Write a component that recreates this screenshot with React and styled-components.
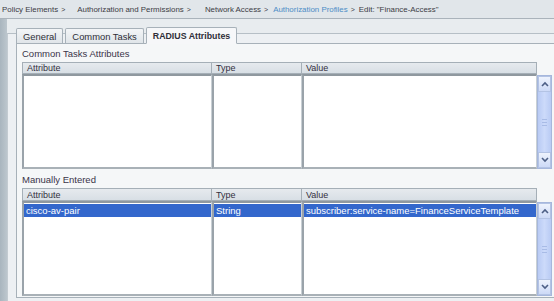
import React from 'react';
import styled, {createGlobalStyle} from 'styled-components';

const Global = createGlobalStyle`
  html, body {
    margin: 0;
    padding: 0;
    background: #e8ecef;
    font-family: "Liberation Sans", Arial, sans-serif;
    font-size: 9.5px;
    color: #343440;
    overflow: hidden;
  }
`;

const Breadcrumb = styled.div`
  height: 18px;
  line-height: 20px;
  padding-left: 2px;
  background: #e1e6ea;
  border-bottom: 1px solid #aab3bb;
  font-size: 7.9px;
  color: #3c3c44;
  white-space: nowrap;
`;

const Crumb = styled.span`
  color: ${props => (props.link ? '#4b8dc6' : '#3c3c44')};
`;

const Sep = styled.span`
  margin-left: 3px;
  margin-right: ${props => props.after}px;
  font-size: 7px;
`;

const Main = styled.div`
  display: flex;
  height: 282px;
`;

const SideStrip = styled.div`
  width: 7px;
  background: linear-gradient(to right, #a9b5be, #bcc6cd);
  flex-shrink: 0;
`;

const Frame = styled.div`
  flex: 1;
  margin-top: 14px;
  border-top: 1px solid #b6bfc6;
  border-left: 1px solid #c3cbd1;
  background: #edf0f3;
  display: flex;
  flex-direction: column;
`;

const TabsRow = styled.div`
  display: flex;
  align-items: flex-end;
  gap: 2px;
  margin-top: -7px;
  padding-left: 8px;
  position: relative;
  z-index: 1;
`;

const Tab = styled.div`
  height: ${props => (props.active ? '15px' : '14px')};
  line-height: ${props => (props.active ? '16px' : '15px')};
  padding: 0 6px;
  border: 1px solid #a7b1b9;
  border-bottom: ${props => (props.active ? '1px solid #f6f7f9' : 'none')};
  border-radius: 2px 2px 0 0;
  margin-bottom: ${props => (props.active ? '-1px' : '0')};
  background: ${props => (props.active ? '#f6f7f9' : 'linear-gradient(#f3f5f7, #e0e5e9)')};
  font-weight: ${props => (props.active ? 'bold' : 'normal')};
  font-size: ${props => (props.active ? '8.8px' : '9.4px')};
  color: #2e2e38;
`;

const TabPanel = styled.div`
  flex: 1;
  margin-left: 8px;
  margin-right: -6px;
  margin-bottom: 3px;
  border: 1px solid #a7b1b9;
  background: #f5f7f8;
  padding: 1px 0 0 5px;
`;

const SectionLabel = styled.div`
  height: 17px;
  line-height: 17px;
  color: #3a3448;
`;

const Table = styled.div`
  display: grid;
  grid-template-columns: 190px 90px 235px 15px;
  grid-template-rows: ${props => props.headH}px 95px;
  margin-bottom: ${props => props.gap}px;
`;

const HeadCell = styled.div`
  background: linear-gradient(#e6eaee, #d8dfe5);
  border: 1px solid #a5afb7;
  border-left: ${props => (props.first ? '1px solid #a5afb7' : 'none')};
  padding-left: 4px;
  line-height: ${props => props.h - 1}px;
  font-size: 9px;
  color: #34303e;
`;

const HeadGap = styled.div``;

const BodyCell = styled.div`
  background: #fff;
  border-top: 2px solid #8f989f;
  border-left: 2px solid #9aa3aa;
  border-right: 1px solid #c9d0d5;
  border-bottom: 2px solid #a9b1b7;
  padding-top: 1px;
  overflow: hidden;
`;

const Row = styled.div`
  height: 13px;
  line-height: 14px;
  padding-left: 2px;
  background: #3367cc;
  color: #fff;
  white-space: nowrap;
  margin-right: ${props => (props.last ? '0' : '-1px')};
`;

const Scrollbar = styled.div`
  display: flex;
  flex-direction: column;
  border: 1px solid #a6b7dc;
  background: linear-gradient(to right, #b9cbf4, #ccdafa 50%, #b9cbf4);
  margin-top: 1px;
`;

const ScrollBtn = styled.div`
  height: 14px;
  display: flex;
  align-items: center;
  justify-content: center;
  background: linear-gradient(#eef3fd, #cddaf7);
  border: 1px solid #b3c3e4;
`;

const Track = styled.div`
  flex: 1;
  display: flex;
  align-items: center;
  justify-content: center;
`;

const Grip = styled.div`
  width: 5px;
  height: 5px;
  border-top: 1px solid #a8bbe6;
  border-bottom: 1px solid #a8bbe6;
  position: relative;
  &::after {
    content: '';
    position: absolute;
    left: 0;
    right: 0;
    top: 2px;
    border-top: 1px solid #a8bbe6;
  }
`;

const Chevron = ({up}) => (
  <svg width="8" height="6" viewBox="0 0 8 6">
    <path d={up ? 'M1 5 L4 2 L7 5' : 'M1 1 L4 4 L7 1'} fill="none" stroke="#4d5f86" strokeWidth="1.6" />
  </svg>
);

const ScrollBar = () => (
  <Scrollbar>
    <ScrollBtn><Chevron up /></ScrollBtn>
    <Track><Grip /></Track>
    <ScrollBtn><Chevron /></ScrollBtn>
  </Scrollbar>
);

const AttrTable = ({headH, gap, row}) => (
  <Table headH={headH} gap={gap}>
    <HeadCell first h={headH}>Attribute</HeadCell>
    <HeadCell h={headH}>Type</HeadCell>
    <HeadCell h={headH}>Value</HeadCell>
    <HeadGap />
    <BodyCell>{row && <Row>{row[0]}</Row>}</BodyCell>
    <BodyCell>{row && <Row>{row[1]}</Row>}</BodyCell>
    <BodyCell>{row && <Row last>{row[2]}</Row>}</BodyCell>
    <ScrollBar />
  </Table>
);

const crumbs = [
  {label: 'Policy Elements', after: 12},
  {label: 'Authorization and Permissions', after: 14},
  {label: 'Network Access', after: 5},
  {label: 'Authorization Profiles', link: true, after: 4},
  {label: 'Edit: "Finance-Access"'},
];

const App = () => (
  <div>
    <Global />
    <Breadcrumb>
      {crumbs.map((c, i) => (
        <React.Fragment key={i}>
          <Crumb link={c.link}>{c.label}</Crumb>
          {c.after && <Sep after={c.after}>&gt;</Sep>}
        </React.Fragment>
      ))}
    </Breadcrumb>
    <Main>
      <SideStrip />
      <Frame>
        <TabsRow>
          <Tab>General</Tab>
          <Tab>Common Tasks</Tab>
          <Tab active>RADIUS Attributes</Tab>
        </TabsRow>
        <TabPanel>
          <SectionLabel>Common Tasks Attributes</SectionLabel>
          <AttrTable headH={12} gap={2} />
          <SectionLabel>Manually Entered</SectionLabel>
          <AttrTable headH={13} gap={0} row={['cisco-av-pair', 'String', 'subscriber:service-name=FinanceServiceTemplate']} />
        </TabPanel>
      </Frame>
    </Main>
  </div>
);

export default App;
